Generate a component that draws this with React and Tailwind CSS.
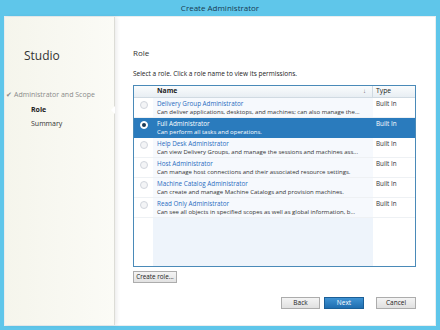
const roles = [
  { name: 'Delivery Group Administrator', desc: 'Can deliver applications, desktops, and machines; can also manage the...' },
  { name: 'Full Administrator', desc: 'Can perform all tasks and operations.', selected: true },
  { name: 'Help Desk Administrator', desc: 'Can view Delivery Groups, and manage the sessions and machines ass...' },
  { name: 'Host Administrator', desc: 'Can manage host connections and their associated resource settings.' },
  { name: 'Machine Catalog Administrator', desc: 'Can create and manage Machine Catalogs and provision machines.' },
  { name: 'Read Only Administrator', desc: 'Can see all objects in specified scopes as well as global information, b...' },
];

function Radio({ checked }) {
  return (
    <div className={`w-[8px] h-[8px] rounded-full border flex items-center justify-center ${checked ? 'bg-white border-white' : 'bg-gray-100 border-gray-300'}`}>
      {checked && <div className="w-[4px] h-[4px] rounded-full bg-[#1b3a55]" />}
    </div>
  );
}

export default function App() {
  return (
    <div className="w-[440px] h-[330px] bg-[#5fc6ea] flex flex-col overflow-hidden" style={{ fontFamily: '"Open Sans", "Noto Sans", sans-serif' }}>
      <div className="h-[16px] flex items-center justify-center text-[8px] text-[#173a52]">Create Administrator</div>
      <div className="mx-[4px] h-[310px] flex bg-white border border-[#e9eef0]">
        {/* sidebar */}
        <div className="w-[110px] shrink-0 bg-gradient-to-r from-[#f5f5ec] to-[#fbfbf6] border-r border-[#dcdcd6] shadow-[2px_0_4px_rgba(0,0,0,0.08)] relative">
          <div className="mt-[30px] ml-[19px] text-[12px] text-[#333]">Studio</div>
          <div className="mt-[25px] ml-[1px] text-[7px] text-[#8a8a8a] flex items-center gap-[2px]">
            <span className="text-[7px] text-[#8a8a8a]">✔</span>
            <span>Administrator and Scope</span>
          </div>
          <div className="mt-[4px] ml-[26px] text-[7px] font-bold text-[#222]">Role</div>
          <div className="mt-[4px] ml-[26px] text-[7px] text-[#333]">Summary</div>
          <div className="absolute right-[-1px] top-[89px] w-0 h-0 border-y-[4px] border-y-transparent border-r-[4px] border-r-white" />
        </div>
        {/* main */}
        <div className="flex-1 min-w-0 pl-[18px] pr-[19px] flex flex-col">
          <div className="mt-[30px] text-[8px] text-[#333]">Role</div>
          <div className="mt-[10px] text-[6.5px] text-[#222]">Select a role. Click a role name to view its permissions.</div>
          <div className="mt-[6px] h-[182px] border border-[#4a8ab8] bg-white flex flex-col">
            <div className="h-[12px] flex bg-gradient-to-b from-[#fafcfd] to-[#e8eef3] border-b border-[#d0dae2] text-[6.8px] text-[#222]">
              <div className="w-[19px]" />
              <div className="flex-1 flex items-center justify-between pl-[4px] pr-[6px] border-r border-[#d0dae2] font-bold">
                <span>Name</span>
                <span className="text-[6px] font-normal text-[#666]">↓</span>
              </div>
              <div className="w-[42px] flex items-center pl-[3px]">Type</div>
            </div>
            {roles.map((r) => (
              <div key={r.name} className={`h-[20px] flex border-b ${r.selected ? 'bg-[#2a7bbd] border-[#2a7bbd] text-white' : 'border-[#eef1f4]'}`}>
                <div className="w-[19px] flex items-start justify-center pt-[3px]">
                  <Radio checked={r.selected} />
                </div>
                <div className={`flex-1 min-w-0 pl-[4px] pt-[2px] leading-[8px] ${r.selected ? '' : 'bg-[#f6f9fd]'}`}>
                  <div className={`text-[6.3px] ${r.selected ? 'text-white' : 'text-[#2a6cc0]'}`}>{r.name}</div>
                  <div className={`text-[6px] whitespace-nowrap ${r.selected ? 'text-white' : 'text-[#333]'}`}>{r.desc}</div>
                </div>
                <div className={`w-[42px] pl-[3px] pt-[2px] text-[6.3px] leading-[8px] ${r.selected ? 'text-white' : 'text-[#333]'}`}>Built In</div>
              </div>
            ))}
            <div className="flex-1 flex">
              <div className="w-[19px]" />
              <div className="flex-1 bg-[#eef4fb]" />
              <div className="w-[42px]" />
            </div>
          </div>
          <div className="mt-[4px] flex">
            <button className="w-[44px] h-[12px] text-[6.3px] text-[#222] bg-gradient-to-b from-[#f4f4f4] to-[#e2e2e2] border border-[#acacac] leading-none">Create role...</button>
          </div>
          <div className="mt-[14px] flex justify-end gap-[4px]">
            <button className="w-[39px] h-[12px] text-[6.5px] text-[#222] bg-gradient-to-b from-[#f4f4f4] to-[#e0e0e0] border border-[#acacac] leading-none">Back</button>
            <button className="w-[40px] h-[12px] text-[6.5px] text-white bg-gradient-to-b from-[#3f93d3] to-[#1f6eb0] border border-[#1b5e96] leading-none mr-[8px]">Next</button>
            <button className="w-[40px] h-[12px] text-[6.5px] text-[#222] bg-gradient-to-b from-[#f4f4f4] to-[#e0e0e0] border border-[#acacac] leading-none">Cancel</button>
          </div>
        </div>
      </div>
    </div>
  );
}
